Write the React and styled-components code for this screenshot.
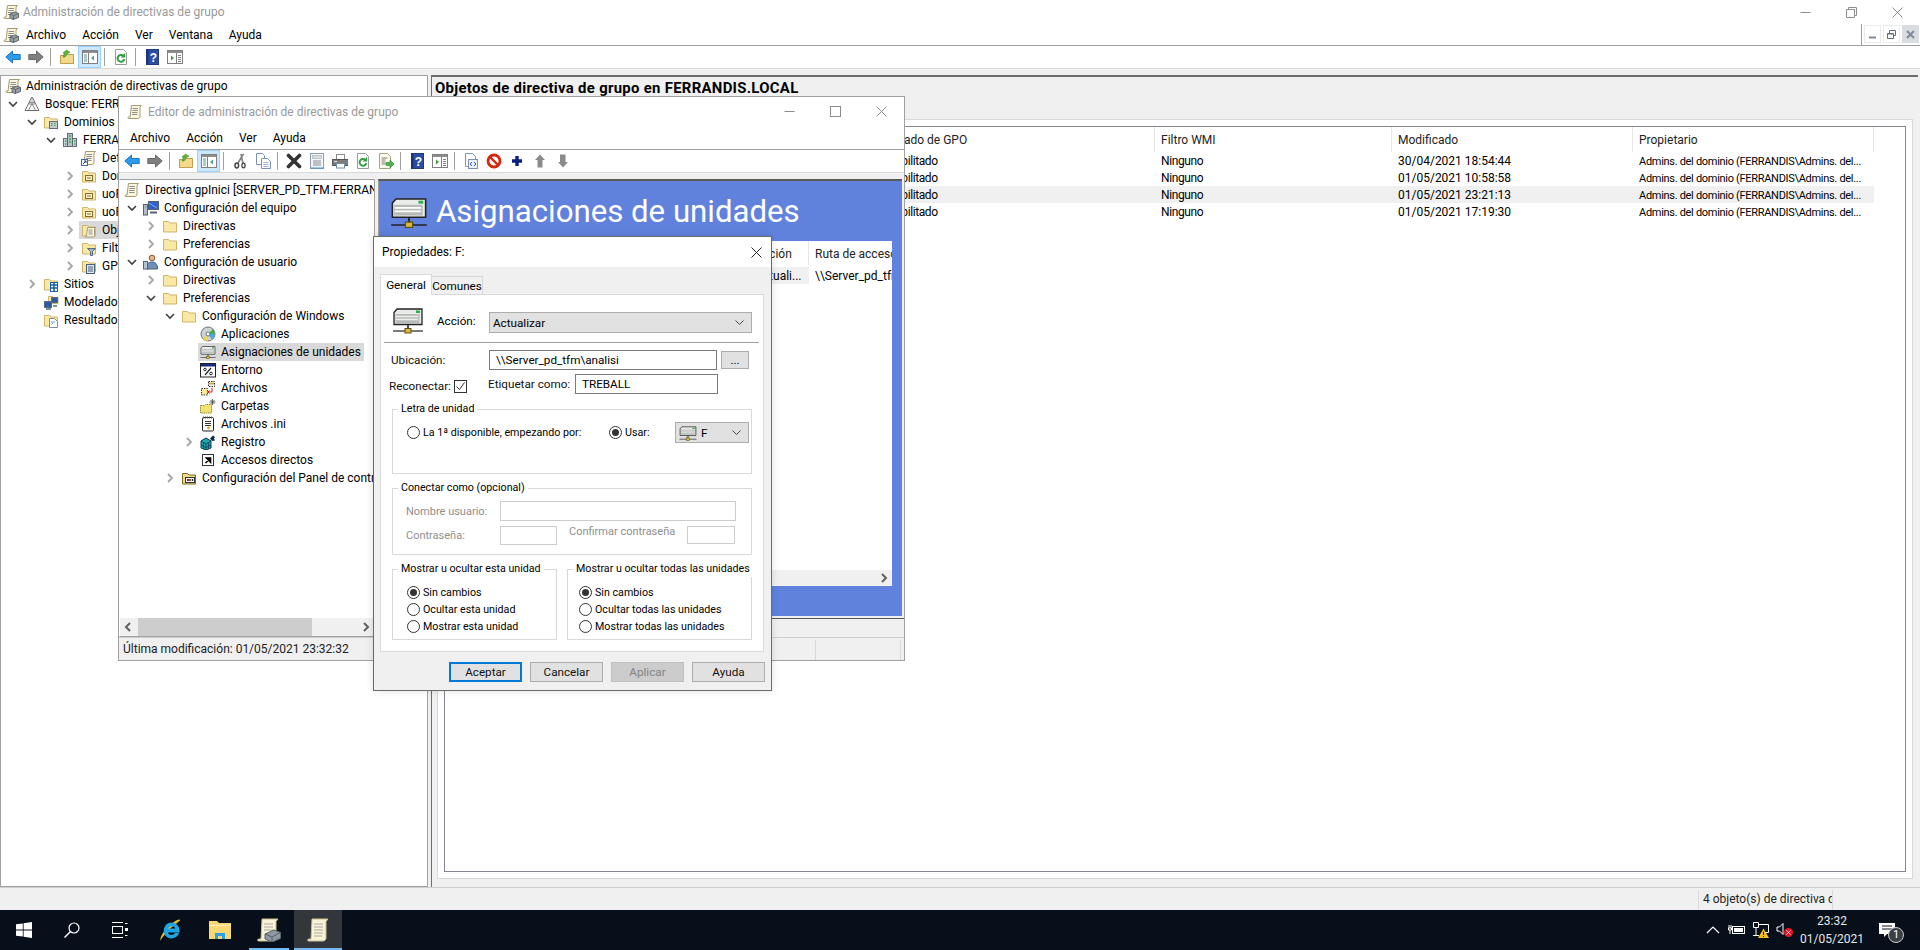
import styled, { createGlobalStyle } from 'styled-components'

const GlobalStyle = createGlobalStyle`
html, body { margin: 0; padding: 0; background: #fff; overflow: hidden; }
* { box-sizing: border-box; }
body { font-family: Roboto, "Noto Sans", sans-serif; font-size: 12px; color: #000; }
`

// ---- icons ----
const IconSvg = styled.svg`
display: block;
flex: none;
`

const paper = '#fbf6dc'
const paperEdge = '#a59a74'
const folderFill = '#f9e8a6'
const folderEdge = '#cfb469'

const FolderBase = () => <path d="M1.5 3.5h5l1.5 1.5h6.5v9h-13z" fill={folderFill} stroke={folderEdge} />
const ScrollBase = () => (
  <>
    <path d="M4.5 1.5h10l-1.5 1.5v9c0 1.5-1 2.5-2 2.5H1.5c-.8 0-.8-1.5.3-1.5H3z" fill={paper} stroke={paperEdge} />
    <path d="M5.5 4.5h5.5M5.5 6.5h5.5M5 8.5h5.5M5 10.5h5.5" stroke="#8f8f8f" />
  </>
)

const GLYPHS = {
  folder: <FolderBase />,
  scroll: <ScrollBase />,
  gpmc: (
    <>
      <ScrollBase />
      <path d="M7 10l5-2 3.5 1.5v4L10 15.5 7 14z" fill="#9aa3a8" stroke="#5e666b" />
      <path d="M7 10l3.5 1.5 5-2M10.5 11.5v4" stroke="#5e666b" fill="none" />
    </>
  ),
  back: <path d="M.8 8L7.5 2v3.5h7.7v5H7.5V14z" fill="#2d9bec" stroke="#2179bd" strokeLinejoin="round" />,
  forward: <path d="M15.2 8L8.5 2v3.5H.8v5h7.7V14z" fill="#808080" stroke="#6b6b6b" strokeLinejoin="round" />,
  up: (
    <>
      <path d="M1.5 6.5h5l1-1h7v9h-13z" fill="#f3d98b" stroke="#bf9f4f" />
      <path d="M4 8l1.5-4H4l3.5-3L11 3.5 9 4 6 8z" fill="#5fb336" stroke="#3f8a20" strokeWidth=".6" />
    </>
  ),
  tree: (
    <>
      <rect x=".5" y="1.5" width="15" height="13" fill="#fff" stroke="#7f7f7f" />
      <rect x="1" y="2" width="14" height="2" fill="#8d8d8d" />
      <path d="M6.5 4v10" stroke="#7f7f7f" />
      <path d="M2 6h3M2 8h3M2 10h3M2 12h3" stroke="#4f9a9a" />
      <path d="M12 6.5v5L9 9z" fill="#4f9a9a" />
    </>
  ),
  refresh: (
    <>
      <path d="M2.5 .5h8l3 3v12h-11z" fill="#fff" stroke="#9a9a9a" />
      <path d="M11.3 10a3.4 3.4 0 1 1-1-3.2" fill="none" stroke="#2f9e3f" strokeWidth="2" />
      <path d="M12.2 3.8v4.7H7.8z" fill="#2f9e3f" />
    </>
  ),
  help: (
    <>
      <rect x="2.5" y=".5" width="12" height="15" fill="#2c4da6" stroke="#203a80" />
      <rect x="2.5" y=".5" width="2" height="15" fill="#1c3378" />
      <text x="9.5" y="12.5" fontSize="12" fontWeight="700" fill="#fff" textAnchor="middle" fontFamily="Liberation Sans, sans-serif">?</text>
    </>
  ),
  action: (
    <>
      <rect x=".5" y="1.5" width="15" height="13" fill="#fff" stroke="#7f7f7f" />
      <rect x="1" y="2" width="14" height="2" fill="#8d8d8d" />
      <path d="M9.5 4v10" stroke="#7f7f7f" />
      <path d="M11 6.5h3M11 8.5h3M11 10.5h3M11 12.5h3" stroke="#7f7f7f" />
      <path d="M4 6.5v5L7 9z" fill="#3fa03f" />
    </>
  ),
  cut: (
    <>
      <path d="M11.5.8L6 10M9 .8l2 9.5" stroke="#7e7e7e" strokeWidth="1.6" fill="none" />
      <ellipse cx="4.8" cy="12.5" rx="1.8" ry="2.4" fill="none" stroke="#444" strokeWidth="1.5" />
      <ellipse cx="11.5" cy="12.5" rx="1.6" ry="2.3" fill="none" stroke="#444" strokeWidth="1.3" />
    </>
  ),
  copy: (
    <>
      <path d="M1.5.5h6l2 2v9h-8z" fill="#fff" stroke="#7993b5" />
      <path d="M6.5 5.5h6l3 3v7h-9z" fill="#fff" stroke="#7993b5" />
      <path d="M8.5 9.5h5M8.5 11.5h5M8.5 13.5h5" stroke="#9fb4cf" />
    </>
  ),
  del: <path d="M2.5 2.5l11 11M13.5 2.5l-11 11" stroke="#333" strokeWidth="3.6" strokeLinecap="round" />,
  props: (
    <>
      <rect x="1.5" y=".5" width="13" height="15" fill="#f6f6f6" stroke="#8f9ba8" />
      <rect x="3.5" y="2.5" width="9" height="3" fill="#d7dde4" stroke="#a5afba" strokeWidth=".6" />
      <path d="M4 8h8M4 10h8M4 12h8" stroke="#7f8c9a" />
      <path d="M2 15h12" stroke="#3d9ad6" />
    </>
  ),
  print: (
    <>
      <rect x="4.5" y="1.5" width="8" height="5" fill="#fff" stroke="#8a8a8a" />
      <rect x=".5" y="6.5" width="16" height="6" fill="#7c7c7c" stroke="#555" />
      <rect x="4.5" y="10.5" width="8" height="4.5" fill="#fff" stroke="#6e8fb0" />
      <path d="M2 8.5h3" stroke="#e4e4e4" />
    </>
  ),
  exportList: (
    <>
      <path d="M1.5 .5h8l3 3v12h-11z" fill="#fdfbe8" stroke="#a8a183" />
      <path d="M3.5 5h6M3.5 7h4M3.5 9h4M3.5 11h4" stroke="#7d7d7d" />
      <path d="M8 9.5h4V7l4 4-4 4v-2.5H8z" fill="#4fb34f" stroke="#2f8a2f" strokeWidth=".6" />
    </>
  ),
  xml: (
    <>
      <path d="M2.5 .5h7l3 3v4" fill="#fff" stroke="#7c94b5" />
      <path d="M2.5 .5v13h4" fill="none" stroke="#7c94b5" />
      <rect x="5.5" y="6.5" width="9" height="9" fill="#e9f0fb" stroke="#7c94b5" />
      <path d="M9 9l-2 2 2 2M11 9l2 2-2 2" stroke="#2f58b8" fill="none" />
    </>
  ),
  stop: (
    <>
      <circle cx="8" cy="8" r="6" fill="#fff" stroke="#d8250e" strokeWidth="2.8" />
      <path d="M4 4l8 8" stroke="#d8250e" strokeWidth="2.4" />
    </>
  ),
  plus: <path d="M8 3v10M3 8h10" stroke="#0b1f80" strokeWidth="3.4" />,
  upGray: <path d="M8 1.5L13 7H10.5v7.5h-5V7H3z" fill="#8b8b8b" />,
  downGray: <path d="M5 1.5h5.5V9H13l-5 5.5L3 9h2z" fill="#8b8b8b" />,
  forest: (
    <>
      <path d="M8 1L15 14.5H1z" fill="#fff" stroke="#6c6c6c" />
      <path d="M8 7.5L4.5 14.5M8 7.5l3.5 7M5 8h6" stroke="#8a8a8a" fill="none" />
      <path d="M8 1l3 5.5H5z" fill="#d7d7d7" stroke="#6c6c6c" strokeWidth=".7" />
    </>
  ),
  domains: (
    <>
      <FolderBase />
      <rect x="6.5" y="7.5" width="8" height="7" fill="#c4cbd3" stroke="#5f6b78" />
      <path d="M8 9.5h1.5M11 9.5h1.5M8 11.5h1.5M11 11.5h1.5" stroke="#3f9a56" />
    </>
  ),
  domain: (
    <>
      <rect x="5.5" y="1.5" width="5" height="13" fill="#b6bec6" stroke="#5f6b78" />
      <rect x="1.5" y="6.5" width="4" height="8" fill="#c7ced5" stroke="#5f6b78" />
      <rect x="10.5" y="6.5" width="4" height="8" fill="#c7ced5" stroke="#5f6b78" />
      <path d="M7 4h2M7 7h2M7 10h2M3 9h1.5M12 9h1.5M3 12h1.5M12 12h1.5" stroke="#3caa50" strokeWidth="1.4" />
    </>
  ),
  gpolink: (
    <>
      <ScrollBase />
      <rect x=".5" y="9.5" width="6" height="6" fill="#fff" stroke="#4466aa" />
      <path d="M2 14l3-3M3 11h2v2" stroke="#1b3f9a" fill="none" />
    </>
  ),
  ou: (
    <>
      <FolderBase />
      <rect x="4.5" y="7.5" width="7" height="5" fill="#fff3c9" stroke="#7e6d32" />
      <path d="M6 10h4" stroke="#7e6d32" />
    </>
  ),
  obj: (
    <>
      <FolderBase />
      <path d="M6.5 5.5h8l-1 1v6.5c0 1-.8 2-1.6 2H4.5c-.6 0-.6-1 .2-1H5.5z" fill={paper} stroke={paperEdge} />
      <path d="M7.5 8h4M7.5 10h4M7.5 12h4" stroke="#8f8f8f" />
    </>
  ),
  filter: (
    <>
      <FolderBase />
      <path d="M6.5 8.5h8l-3 3v4h-2v-4z" fill="#9fb9cf" stroke="#566b80" />
    </>
  ),
  starter: (
    <>
      <FolderBase />
      <rect x="5.5" y="6.5" width="8" height="9" fill="#dfe6ef" stroke="#4e5f74" />
      <path d="M7 9h5M7 11h5M7 13h5" stroke="#42617f" />
    </>
  ),
  sites: (
    <>
      <FolderBase />
      <rect x="7.5" y="6.5" width="7" height="9" fill="#fff" stroke="#1560b0" />
      <path d="M8 9h6M8 12h6M11 7v8" stroke="#1560b0" strokeWidth="1.6" />
    </>
  ),
  model: (
    <>
      <path d="M5.5 2.5h4l1 1h4.5v6h-9.5z" fill={folderFill} stroke={folderEdge} />
      <rect x="1.5" y="7.5" width="7" height="6" fill="#2a5aa8" stroke="#5c6976" />
      <rect x="8.5" y="3.5" width="6" height="5" fill="#2a5aa8" stroke="#5c6976" />
      <path d="M3 15h5M10 12h4" stroke="#5c6976" strokeWidth="1.5" />
    </>
  ),
  results: (
    <>
      <FolderBase />
      <path d="M6.5 6.5h5l3 3v6h-8z" fill="#fff" stroke="#7f8c9a" />
      <path d="M8.5 12.5l1.5-1.5M8 10h4" stroke="#5fa0d0" />
    </>
  ),
  computer: (
    <>
      <rect x="5.5" y="1.5" width="10" height="8" fill="#2c62d0" stroke="#55606c" />
      <path d="M6 3l8 5" stroke="#7fb0f0" />
      <rect x=".5" y="4.5" width="4" height="10.5" fill="#b5bec7" stroke="#55606c" />
      <path d="M7 12.5h7" stroke="#55606c" strokeWidth="2" />
      <path d="M2 7h1.5" stroke="#3f9ad6" />
    </>
  ),
  user: (
    <>
      <circle cx="9" cy="4" r="2.8" fill="#e8b585" stroke="#7e5a38" />
      <path d="M3.5 15c0-5 2-7 5.5-7s5.5 2 5.5 7z" fill="#6f8fb8" stroke="#4a5f7e" />
      <rect x=".5" y="7.5" width="4" height="7.5" fill="#b6c3d4" stroke="#536478" />
    </>
  ),
  cd: (
    <>
      <circle cx="8" cy="8" r="7" fill="#cfd2d4" stroke="#6f7478" />
      <path d="M8 8L13 3a7 7 0 0 1 1.8 5z" fill="#3fb04f" />
      <path d="M8 8L3 13a7 7 0 0 0 5 2z" fill="#f1d63f" />
      <path d="M8 8L15 8a7 7 0 0 1-3 5.5z" fill="#49a7e6" />
      <circle cx="8" cy="8" r="2" fill="#fff" stroke="#6f7478" />
    </>
  ),
  env: (
    <>
      <rect x=".5" y="1.5" width="15" height="13.5" fill="#fff" stroke="#222" />
      <rect x="1" y="2" width="14" height="2.5" fill="#18287a" />
      <path d="M5 13l6-7" stroke="#222" strokeWidth="1.2" />
      <circle cx="5" cy="7.5" r="1.3" fill="none" stroke="#222" />
      <circle cx="11" cy="11.5" r="1.3" fill="none" stroke="#222" />
    </>
  ),
  files: (
    <>
      <path d="M8.5 1.5h6v5h-6z" fill="#fff" stroke="#333" strokeDasharray="1.5 1" />
      <path d="M9 3.5h5" stroke="#c8a93a" strokeWidth="2" />
      <path d="M1.5 8.5h6v6.5h-6z" fill="#f7ec94" stroke="#333" strokeDasharray="1.5 1" />
      <path d="M12 8v4H8M9.5 10.5L8 12l1.5 1.5" stroke="#d21c1c" fill="none" />
    </>
  ),
  folders: (
    <>
      <path d="M.5 7.5h4l1-1h6v8.5h-11z" fill="#f2e36f" stroke="#8d8233" strokeDasharray="1.4 .8" />
      <path d="M12.5 1v6M9.5 4h6M10.5 2l4 4M14.5 2l-4 4" stroke="#555" strokeWidth=".9" />
    </>
  ),
  ini: (
    <>
      <rect x="2.5" y="1.5" width="11" height="13.5" rx="1" fill="#fff" stroke="#222" />
      <path d="M3 1.5h10" stroke="#555" strokeWidth="2" strokeDasharray="1 1" />
      <path d="M5 5.5h6M5 7.5h6M5 9.5h6" stroke="#333" />
      <circle cx="8.5" cy="12" r="1.4" fill="#d9b126" />
    </>
  ),
  registry: (
    <>
      <path d="M1 7l5-3 5 3v7l-5 2-5-2z" fill="#21a5a5" stroke="#0c3b5c" />
      <path d="M1 7l5 3 5-3M6 10v6M3.5 8.5v6M8.5 8.5v6M1 11l5 2.5 5-2.5" stroke="#0c3b5c" fill="none" strokeWidth=".8" />
      <path d="M10 4.5l3-3 2 1.5-1 1.5 1 2-3 .5z" fill="#102a5a" />
    </>
  ),
  shortcut: (
    <>
      <rect x="2.5" y="2.5" width="11" height="11" fill="#fff" stroke="#333" />
      <path d="M5.5 11l4-4M6.5 6h4v4z" stroke="#000" strokeWidth="1.6" fill="#000" />
    </>
  ),
  cpanel: (
    <>
      <path d="M1.5 3.5h5l1.5 1.5h6.5v9h-13z" fill="#f0dc7c" stroke="#77692c" />
      <rect x="4.5" y="7.5" width="9" height="5" fill="#fff" stroke="#333" />
      <path d="M6 10h2" stroke="#c01818" strokeWidth="2" />
      <path d="M9 11V9M11.5 11V9" stroke="#333" strokeWidth="1.5" />
    </>
  ),
}

const Glyph = ({ name, size = 16 }) => (
  <IconSvg width={size} height={size} viewBox="0 0 16 16">{GLYPHS[name]}</IconSvg>
)

// the mapped drive: used small in the tree and large in the dialog and banner
const DriveIcon = ({ size = 32, light }) => (
  <IconSvg width={size} height={size} viewBox="0 0 32 32">
    <path d="M2 8.5L5 5h25v15.5H2z" fill="#e9ece8" stroke="#222" strokeWidth="1.3" />
    <rect x="3.5" y="10" width="24" height="9" fill="#b7bcb8" />
    <path d="M4 12.5h22M4 15.5h22" stroke={light ? '#fff' : '#eef0ee'} strokeWidth="1.4" />
    <rect x="24" y="6.5" width="4" height="2.5" fill="#28b04a" />
    <path d="M16 20.5v5" stroke="#222" strokeWidth="1.6" />
    <path d="M1 27h30" stroke="#222" strokeWidth="1.2" />
    <rect x="13" y="24.5" width="6" height="4.5" fill="#d9b93c" stroke="#5f5012" />
  </IconSvg>
)

const ArrowLeft = () => (
  <IconSvg width="10" height="10" viewBox="0 0 10 10"><path d="M7 1L3 5l4 4" fill="none" stroke="#606060" strokeWidth="2" /></IconSvg>
)
const ArrowRight = () => (
  <IconSvg width="10" height="10" viewBox="0 0 10 10"><path d="M3 1l4 4-4 4" fill="none" stroke="#606060" strokeWidth="2" /></IconSvg>
)
const SelectArrow = () => (
  <IconSvg width="9" height="6" viewBox="0 0 9 6"><path d="M.5 .5l4 4 4-4" fill="none" stroke="#444" /></IconSvg>
)
const CheckMark = () => (
  <IconSvg width="11" height="11" viewBox="0 0 11 11"><path d="M1.5 5.5l3 3 5-7" fill="none" stroke="#333" /></IconSvg>
)

// ---- shell ----
const Screen = styled.div`
position: relative;
width: 1920px;
height: 950px;
display: flex;
flex-direction: column;
overflow: hidden;
background: #fff;
`

const TitleBar = styled.div`
display: flex;
align-items: center;
height: ${p => p.$h}px;
padding-left: ${p => p.$left}px;
padding-top: ${p => p.$pt || 0}px;
gap: ${p => p.$gap}px;
background: #fff;
flex: none;
`

const TitleText = styled.span`
color: #999;
`

const WinControls = styled.div`
display: flex;
margin-left: auto;
`

const WinButton = styled.div`
width: ${p => p.$w}px;
height: ${p => p.$h}px;
display: flex;
align-items: center;
justify-content: center;
`

const MenuBar = styled.div`
display: flex;
align-items: center;
height: ${p => p.$h}px;
padding-left: ${p => p.$left}px;
padding-top: ${p => p.$pt || 0}px;
gap: 16px;
border-bottom: 1px solid #a0a0a0;
background: #fff;
flex: none;
`

const MenuLogo = styled.div`
margin-right: -9px;
`

const MdiButtons = styled.div`
margin-left: auto;
height: 100%;
display: flex;
gap: 2px;
padding: 1px 1px 3px 2px;
border-left: 1px solid #a0a0a0;
`

const MdiButton = styled.div`
width: 17px;
height: 18px;
display: flex;
align-items: center;
justify-content: center;
border: 1px solid ${p => (p.$on ? '#d9dde2' : '#ebebeb')};
background: ${p => (p.$on ? '#d9dde2' : '#fff')};
`

const Toolbar = styled.div`
display: flex;
align-items: center;
height: 22px;
padding-left: 1px;
background: #fff;
flex: none;
`

const ToolSlot = styled.div`
width: 23px;
height: 22px;
display: flex;
align-items: center;
justify-content: center;
flex: none;
${p => p.$pressed && 'background: #cce8ff; border: 1px solid #99d1ff;'}
`

const ToolSep = styled.div`
width: 1px;
height: 18px;
margin: 0 4px 0 3px;
background: #a0a0a0;
flex: none;
`

const MainBody = styled.div`
flex: 1;
min-height: 0;
display: flex;
padding-top: 6px;
background: #f0f0f0;
border-top: 1px solid #d9d9d9;
`

const TreePane = styled.div`
width: ${p => p.$w}px;
flex: none;
background: #fff;
border: 1px solid #a0a0a0;
border-left-color: ${p => (p.$noLeft ? 'transparent' : '#a0a0a0')};
overflow: hidden;
display: flex;
flex-direction: column;
`

const TreeScroll = styled.div`
flex: 1;
min-height: 0;
overflow: hidden;
padding-top: ${p => p.$top}px;
`

const Row = styled.div`
display: flex;
align-items: center;
height: 18px;
white-space: nowrap;
padding-left: ${p => (p.$lvl === 0 ? 2 : 2 + 19 * (p.$lvl - 1))}px;
`

const ChevSlot = styled.div`
width: 19px;
height: 18px;
flex: none;
display: flex;
align-items: center;
justify-content: center;
`

const NodeBody = styled.div`
display: flex;
align-items: center;
height: 18px;
padding: 0 3px 0 2px;
gap: 5px;
background: ${p => (p.$sel ? '#d9d9d9' : 'transparent')};
`

const Chevron = ({ dir }) => (
  <IconSvg width="10" height="10" viewBox="0 0 10 10">
    {dir === 'down'
      ? <path d="M1 3l4 4 4-4" fill="none" stroke="#404040" strokeWidth="1.6" />
      : <path d="M3 1l4 4-4 4" fill="none" stroke="#a6a6a6" strokeWidth="1.8" />}
  </IconSvg>
)

const TreeRow = ({ lvl, chev, icon, text, sel }) => (
  <Row $lvl={lvl}>
    {lvl > 0 && <ChevSlot>{chev && <Chevron dir={chev} />}</ChevSlot>}
    <NodeBody $sel={sel}>
      {icon === 'drive' ? <DriveIcon size={16} /> : <Glyph name={icon} />}
      <span>{text}</span>
    </NodeBody>
  </Row>
)

const RightPane = styled.div`
flex: 1;
min-width: 0;
margin: 0 2px 0 3px;
display: flex;
flex-direction: column;
border-top: 2px solid #6d6d6d;
border-left: 1px solid #6d6d6d;
`

const PaneHeading = styled.div`
height: 42px;
flex: none;
padding-left: 3px;
line-height: 22px;
font-size: 14.9px;
letter-spacing: .3px;
font-weight: 700;
`

const TabPage = styled.div`
flex: 1;
min-height: 0;
margin: 0 5px 8px 5px;
padding: 6px;
background: #fff;
border: 1px solid #d9d9d9;
display: flex;
`

const ListBox = styled.div`
flex: 1;
min-width: 0;
border: 1px solid #828790;
background: #fff;
`

const GridRow = styled.div`
display: grid;
grid-template-columns: ${p => p.$cols};
width: max-content;
background: ${p => (p.$sel ? '#f0f0f0' : 'transparent')};
`

const HeadCell = styled.div`
height: ${p => p.$h}px;
line-height: ${p => p.$h + 2}px;
padding-left: 6px;
border-right: 1px solid #e5e5e5;
white-space: nowrap;
overflow: hidden;
color: #222;
`

const BodyCell = styled.div`
height: 17px;
line-height: 19px;
padding-left: 6px;
white-space: nowrap;
overflow: hidden;
background: ${p => (p.$sel ? '#f0f0f0' : 'transparent')};
letter-spacing: ${p => (p.$tight ? '-.4px' : '0')};
`

const OwnerCell = styled(BodyCell)`
font-size: 11px;
letter-spacing: -.3px;
`

const StatusBar = styled.div`
height: 23px;
flex: none;
display: flex;
background: #f0f0f0;
border-top: 1px solid #cfcfcf;
padding-top: 2px;
`

const StatusCell = styled.div`
width: ${p => p.$w}px;
flex: none;
border-right: 1px solid #d9d9d9;
padding-left: 4px;
line-height: 18px;
white-space: nowrap;
overflow: hidden;
color: #222;
`

// ---- editor window ----
const EditorWindow = styled.div`
position: absolute;
left: 118px;
top: 96px;
width: 787px;
height: 565px;
background: #fff;
border: 1px solid #a0a0a0;
display: flex;
flex-direction: column;
`

const EditorBody = styled.div`
flex: 1;
min-height: 0;
display: flex;
padding-top: 6px;
background: #f0f0f0;
border-top: 1px solid #d9d9d9;
`

const EditorRight = styled.div`
flex: 1;
min-width: 0;
margin-left: 3px;
display: flex;
flex-direction: column;
`

const BluePanel = styled.div`
flex: 1;
min-height: 0;
margin-right: 2px;
display: flex;
flex-direction: column;
overflow: hidden;
background: #6082dd;
border-top: 2px solid #5a5a5a;
border-left: 1px solid #a0a0a0;
padding: 0 10px 30px 3px;
`

const Banner = styled.div`
height: 60px;
flex: none;
display: flex;
align-items: center;
padding: 1px 0 0 8px;
gap: 8px;
color: #fff;
font-size: 31.2px;
white-space: nowrap;
`

const DetailList = styled.div`
flex: 1;
min-height: 0;
min-width: 0;
background: #fff;
display: flex;
flex-direction: column;
overflow: hidden;
`

const DetailRows = styled.div`
flex: 1;
min-height: 0;
padding-top: 2px;
`

const HScrollBar = styled.div`
height: ${p => p.$h}px;
flex: none;
display: flex;
align-items: center;
justify-content: ${p => (p.$end ? 'flex-end' : 'flex-start')};
background: #f0f0f0;
padding: 0 3px;
`

const ScrollThumb = styled.div`
width: 174px;
height: 100%;
margin: 0 auto 0 5px;
background: #cdcdcd;
`

const FooterLine = styled.div`
height: 19px;
margin-top: 2px;
flex: none;
border-top: 1px solid #5a5a5a;
`

// ---- dialog ----
const Dialog = styled.div`
position: absolute;
left: 373px;
top: 236px;
width: 399px;
height: 455px;
background: #f0f0f0;
border: 1px solid #6a6a6a;
display: flex;
flex-direction: column;
box-shadow: 0 0 8px rgba(0, 0, 0, .12);
`

const DialogTitle = styled.div`
height: 30px;
flex: none;
display: flex;
align-items: center;
justify-content: space-between;
padding: 0 9px 0 8px;
background: #fff;
`

const DialogBody = styled.div`
flex: 1;
padding: 7px 6px 0 6px;
display: flex;
flex-direction: column;
font-size: 11.7px;
`

const Tabs = styled.div`
display: flex;
align-items: flex-end;
height: 21px;
margin-bottom: -1px;
position: relative;
`

const Tab = styled.div`
height: ${p => (p.$on ? 21 : 19)}px;
width: 52px;
display: flex;
align-items: center;
justify-content: center;
background: ${p => (p.$on ? '#fff' : '#f0f0f0')};
border: 1px solid #d9d9d9;
border-bottom: ${p => (p.$on ? 'none' : '1px solid #d9d9d9')};
margin-left: ${p => (p.$on ? 0 : '-1px')};
position: relative;
z-index: ${p => (p.$on ? 1 : 0)};
`

const TabPanel = styled.div`
width: 384px;
height: 358px;
background: #fff;
border: 1px solid #d9d9d9;
display: flex;
flex-direction: column;
`

const ActionRow = styled.div`
display: flex;
align-items: center;
margin-top: 9px;
height: 32px;
padding-left: 11px;
`

const ActionLabel = styled.span`
width: 52px;
margin-left: 13px;
flex: none;
margin-top: 1px;
`

const SelectBox = styled.div`
width: ${p => p.$w}px;
height: 21px;
flex: none;
display: flex;
align-items: center;
justify-content: space-between;
gap: 5px;
padding: 0 7px 0 3px;
background: #e1e1e1;
border: 1px solid #adadad;
margin-top: ${p => p.$top || 0}px;
`

const SelectValue = styled.span`
display: flex;
align-items: center;
gap: 4px;
`

const Separator = styled.div`
height: 1px;
margin: 6px 4px 0 3px;
background: #a0a0a0;
flex: none;
`

const FormRow = styled.div`
display: flex;
align-items: center;
margin-top: ${p => p.$top}px;
padding-left: ${p => p.$left}px;
flex: none;
`

const FieldLabel = styled.span`
width: ${p => p.$w}px;
flex: none;
white-space: nowrap;
color: ${p => (p.$off ? '#8f8f8f' : '#111')};
font-size: ${p => (p.$off ? '11px' : 'inherit')};
margin-top: ${p => p.$mt || 0}px;
margin-bottom: ${p => p.$mb || 0}px;
padding-left: ${p => p.$pl || 0}px;
`

const TextField = styled.div`
width: ${p => p.$w}px;
height: ${p => p.$h || 20}px;
flex: none;
padding-left: 6px;
line-height: ${p => (p.$h || 20) - 2}px;
background: #fff;
border: 1px solid ${p => (p.$off ? '#cccccc' : '#7a7a7a')};
`

const DotsButton = styled.div`
width: 28px;
height: 18px;
margin-left: 4px;
text-align: center;
line-height: 16px;
background: #e1e1e1;
border: 1px solid #adadad;
`

const CheckBox = styled.div`
width: 13px;
height: 13px;
flex: none;
display: flex;
align-items: center;
justify-content: center;
background: #fff;
border: 1px solid #333;
margin: 4px 21px 0 0;
`

const Group = styled.fieldset`
margin: ${p => p.$top}px 0 0 0;
padding: 0;
width: ${p => p.$w}px;
height: ${p => p.$h}px;
border: 1px solid #d9d9d9;
min-width: 0;
flex: none;
`

const GroupTitle = styled.legend`
margin-left: 5px;
padding: 0 3px;
height: 16px;
line-height: 16px;
font-size: 10.7px;
white-space: nowrap;
`

const GroupsRow = styled.div`
display: flex;
gap: 10px;
margin-left: 11px;
flex: none;
`

const InsetGroup = styled(Group)`
margin-left: 11px;
`

const RadioRow = styled.div`
display: flex;
align-items: center;
height: 17px;
gap: 3px;
padding-left: ${p => p.$left || 0}px;
font-size: 10.7px;
white-space: nowrap;
`

const RadioDot = styled.span`
width: 13px;
height: 13px;
flex: none;
display: flex;
align-items: center;
justify-content: center;
background: #fff;
border: 1px solid #333;
border-radius: 50%;
&::after {
  content: '';
  width: 7px;
  height: 7px;
  border-radius: 50%;
  background: ${p => (p.$on ? '#333' : 'transparent')};
}
`

const RadioList = styled.div`
padding-top: 7px;
`

const DriveLetterRow = styled.div`
display: grid;
grid-template-columns: 202px 66px 74px;
align-items: center;
height: 21px;
margin-top: 5px;
padding-left: 14px;
`

const DialogButtons = styled.div`
display: flex;
justify-content: flex-end;
gap: 8px;
margin-top: 10px;
`

const PushButton = styled.div`
width: 73px;
height: 20px;
display: flex;
align-items: center;
justify-content: center;
background: ${p => (p.$off ? '#cccccc' : '#e1e1e1')};
color: ${p => (p.$off ? '#838383' : '#111')};
border: ${p => (p.$def ? '2px solid #0078d7' : `1px solid ${p.$off ? '#bfbfbf' : '#adadad'}`)};
`

// ---- taskbar ----
const Taskbar = styled.div`
height: 40px;
flex: none;
display: flex;
background: #060f1a;
color: #fff;
`

const TaskSlot = styled.div`
position: relative;
width: 48px;
height: 40px;
flex: none;
display: flex;
align-items: center;
justify-content: center;
margin-left: ${p => p.$left || 0}px;
background: ${p => (p.$active ? '#33373c' : 'transparent')};
${p => p.$open && `&::after {
  content: '';
  position: absolute;
  bottom: 0;
  left: ${p.$active ? 0 : 4}px;
  right: ${p.$active ? 0 : 4}px;
  height: 2px;
  background: #76b9ed;
}`}
`

const Tray = styled.div`
margin-left: auto;
display: flex;
align-items: center;
padding-right: 13px;
`

const TraySlot = styled.div`
width: 24px;
height: 40px;
display: flex;
align-items: center;
justify-content: center;
`

const Clock = styled.div`
width: 70px;
text-align: center;
line-height: 18px;
font-size: 12px;
color: #e8e8e8;
`

const NotifySlot = styled.div`
position: relative;
width: 40px;
height: 40px;
display: flex;
align-items: center;
justify-content: center;
`

const NotifyBadge = styled.span`
position: absolute;
left: 21px;
top: 17px;
width: 16px;
height: 16px;
border-radius: 50%;
border: 1px solid #ccc;
background: #3a3f45;
text-align: center;
line-height: 14px;
font-size: 11px;
`

const WindowsLogo = () => (
  <IconSvg width="16" height="16" viewBox="0 0 16 16">
    <path d="M0 2.3L6.8 1.4V7.6H0zM7.6 1.3L16 0V7.6H7.6zM0 8.4H6.8V14.6L0 13.7zM7.6 8.4H16V16L7.6 14.7z" fill="#fff" />
  </IconSvg>
)
const SearchGlass = () => (
  <IconSvg width="18" height="18" viewBox="0 0 18 18">
    <circle cx="11" cy="7" r="5" fill="none" stroke="#fff" strokeWidth="1.2" />
    <path d="M7.5 10.5L1.5 16.5" stroke="#fff" strokeWidth="1.4" />
  </IconSvg>
)
const TaskViewIcon = () => (
  <IconSvg width="18" height="16" viewBox="0 0 18 16">
    <path d="M1 .5h11M1 15.5h11" stroke="#fff" />
    <rect x="1.5" y="4.5" width="10" height="7" fill="none" stroke="#fff" />
    <rect x="14" y="1" width="2.5" height="1" fill="#fff" />
    <rect x="14" y="6" width="3" height="3" fill="#fff" />
    <rect x="14" y="13" width="2.5" height="1" fill="#fff" />
  </IconSvg>
)
const IeLogo = () => (
  <IconSvg width="24" height="24" viewBox="0 0 24 24">
    <path d="M20.5 1.5c2.5 1.5-5 4-12 12S1 22.5 2 23c-2-1 .5-7 5-12s11-10 13.5-9.5z" fill="#e5b728" />
    <path d="M12.5 4.5a8 8 0 0 1 8 8v2H9c.3 2.7 4.8 3.6 7 .5h4.2c-2 5.6-9 7-13 3.5-4.8-4.3-2.2-14 5.3-14zM9.2 10.5h7c-.4-2.8-6-3.2-7 0z" fill="#1ca6e2" fillRule="evenodd" />
  </IconSvg>
)
const ExplorerIcon = () => (
  <IconSvg width="22" height="20" viewBox="0 0 22 20">
    <path d="M0 1h8l2 2h12v16H0z" fill="#f8d775" />
    <path d="M0 5h22v1H0z" fill="#fff2c0" />
    <path d="M6 19v-6h10v6h-3v-3H9v3z" fill="#2e9fe2" />
  </IconSvg>
)
const BigScroll = () => (
  <IconSvg width="22" height="24" viewBox="0 0 22 24">
    <path d="M5 1h16l-2 2.5V20c0 1.5-1 3-3 3H1.5c-1.2 0-1.2-2 .5-2h2z" fill="#f9f3d6" stroke="#c7bd93" />
    <path d="M7 6h9M7 9h9M7 12h9M7 15h9M7 18h8" stroke="#a9a9a9" />
  </IconSvg>
)
const GpmcBig = () => (
  <IconSvg width="24" height="24" viewBox="0 0 24 24">
    <path d="M5 1h16l-2 2.5V20c0 1.5-1 3-3 3H1.5c-1.2 0-1.2-2 .5-2h2z" fill="#f9f3d6" stroke="#c7bd93" />
    <path d="M7 6h9M7 9h9M7 12h9" stroke="#a9a9a9" />
    <path d="M8 16l9-4 6.5 2.5v6L15 24l-7-3z" fill="#8f99a3" stroke="#59616a" />
    <path d="M8 16l7 3 8.5-4.5M15 19v5" stroke="#59616a" fill="none" />
  </IconSvg>
)
const TrayChevron = () => (
  <IconSvg width="14" height="10" viewBox="0 0 14 10"><path d="M1 8l6-6 6 6" fill="none" stroke="#fff" strokeWidth="1.2" /></IconSvg>
)
const PowerIcon = () => (
  <IconSvg width="18" height="12" viewBox="0 0 18 12">
    <rect x="4.5" y="2.5" width="12" height="7" fill="none" stroke="#fff" />
    <rect x="6" y="4" width="9" height="4" fill="#fff" />
    <path d="M1 1v3M3 1v3M.5 4h3v2H.5zM2 6v4" stroke="#fff" />
  </IconSvg>
)
const NetworkIcon = () => (
  <IconSvg width="18" height="18" viewBox="0 0 18 18">
    <path d="M6.5 3.5h10v8h-5M1.5 1.5h5v5h-5zM4 6.5v8M1 14.5h6" fill="none" stroke="#fff" />
    <path d="M11.5 7.5l5.5 9.5H6z" fill="#f7c21a" />
    <path d="M11.5 10.5v3.5M11.5 15v1" stroke="#111" />
  </IconSvg>
)
const SpeakerMuted = () => (
  <IconSvg width="18" height="16" viewBox="0 0 18 16">
    <path d="M1 5h2.5L7 1.5v11L3.5 9H1z" fill="none" stroke="#fff" />
    <circle cx="12.5" cy="10.5" r="4.5" fill="#e81123" />
    <path d="M10.5 8.5l4 4M14.5 8.5l-4 4" stroke="#fff" />
  </IconSvg>
)
const NotifyBubble = () => (
  <IconSvg width="16" height="15" viewBox="0 0 16 15">
    <path d="M0 0h16v11H8l-3 3v-3H0z" fill="#fff" />
    <path d="M3 3h10M3 6h10" stroke="#060f1a" />
  </IconSvg>
)
const CaptionIcon = ({ kind, color = '#8c8c8c' }) => (
  <IconSvg width="11" height="11" viewBox="0 0 11 11">
    {kind === 'min' && <path d="M.5 5.5h10" stroke={color} />}
    {kind === 'max' && <rect x=".5" y=".5" width="10" height="10" fill="none" stroke={color} />}
    {kind === 'restore' && <path d="M.5 2.5h8v8h-8zM2.5 2.5v-2h8v8h-2" fill="none" stroke={color} />}
    {kind === 'close' && <path d="M.5 .5l10 10M10.5 .5l-10 10" stroke={color} />}
  </IconSvg>
)
const MdiIcon = ({ kind }) => (
  <IconSvg width="9" height="9" viewBox="0 0 9 9">
    {kind === 'min' && <path d="M1 7.5h7" stroke="#7c8a9c" strokeWidth="2" />}
    {kind === 'restore' && <path d="M.5 3.5h6v5h-6zM.5 4h6M2.5 3V.5h6v5h-2" fill="none" stroke="#5f6e82" />}
    {kind === 'close' && <path d="M1 1l7 7M8 1l-7 7" stroke="#7c8a9c" strokeWidth="2" />}
  </IconSvg>
)

// ---- data ----
const MAIN_TREE = [
  { lvl: 0, icon: 'gpmc', text: 'Administración de directivas de grupo' },
  { lvl: 1, chev: 'down', icon: 'forest', text: 'Bosque: FERRANDIS.LOCAL' },
  { lvl: 2, chev: 'down', icon: 'domains', text: 'Dominios' },
  { lvl: 3, chev: 'down', icon: 'domain', text: 'FERRANDIS.LOCAL' },
  { lvl: 4, icon: 'gpolink', text: 'Default Domain Policy' },
  { lvl: 4, chev: 'right', icon: 'ou', text: 'Domain Controllers' },
  { lvl: 4, chev: 'right', icon: 'ou', text: 'uoFerrandis' },
  { lvl: 4, chev: 'right', icon: 'ou', text: 'uoFerrandis2' },
  { lvl: 4, chev: 'right', icon: 'obj', text: 'Objetos de directiva de grupo', sel: true },
  { lvl: 4, chev: 'right', icon: 'filter', text: 'Filtros WMI' },
  { lvl: 4, chev: 'right', icon: 'starter', text: 'GPO de inicio' },
  { lvl: 2, chev: 'right', icon: 'sites', text: 'Sitios' },
  { lvl: 2, icon: 'model', text: 'Modelado de directivas de grupo' },
  { lvl: 2, icon: 'results', text: 'Resultados de directivas de grupo' },
]

const EDITOR_TREE = [
  { lvl: 0, icon: 'scroll', text: 'Directiva gpInici [SERVER_PD_TFM.FERRANDIS.LOCAL] Directiva' },
  { lvl: 1, chev: 'down', icon: 'computer', text: 'Configuración del equipo' },
  { lvl: 2, chev: 'right', icon: 'folder', text: 'Directivas' },
  { lvl: 2, chev: 'right', icon: 'folder', text: 'Preferencias' },
  { lvl: 1, chev: 'down', icon: 'user', text: 'Configuración de usuario' },
  { lvl: 2, chev: 'right', icon: 'folder', text: 'Directivas' },
  { lvl: 2, chev: 'down', icon: 'folder', text: 'Preferencias' },
  { lvl: 3, chev: 'down', icon: 'folder', text: 'Configuración de Windows' },
  { lvl: 4, icon: 'cd', text: 'Aplicaciones' },
  { lvl: 4, icon: 'drive', text: 'Asignaciones de unidades', sel: true },
  { lvl: 4, icon: 'env', text: 'Entorno' },
  { lvl: 4, icon: 'files', text: 'Archivos' },
  { lvl: 4, icon: 'folders', text: 'Carpetas' },
  { lvl: 4, icon: 'ini', text: 'Archivos .ini' },
  { lvl: 4, chev: 'right', icon: 'registry', text: 'Registro' },
  { lvl: 4, icon: 'shortcut', text: 'Accesos directos' },
  { lvl: 3, chev: 'right', icon: 'cpanel', text: 'Configuración del Panel de control' },
]

const GPO_COLS = '436px 274px 237px 241px 241px'
const GPO_HEAD = ['Nombre', 'Estado de GPO', 'Filtro WMI', 'Modificado', 'Propietario']
const GPO_ROWS = [
  ['Default Domain Policy', 'Habilitado', 'Ninguno', '30/04/2021 18:54:44'],
  ['gpo1', 'Habilitado', 'Ninguno', '01/05/2021 10:58:58'],
  ['gpInici', 'Habilitado', 'Ninguno', '01/05/2021 23:21:13', true],
  ['gpo2', 'Habilitado', 'Ninguno', '01/05/2021 17:19:30'],
]
const OWNER = 'Admins. del dominio (FERRANDIS\\Admins. del...'

const DRIVE_COLS = '150px 217px 60px 120px'

const TOOL_MAIN = ['back', 'forward', '|', 'up', '*tree', '|', 'refresh', '|', 'help', 'action']
const TOOL_EDITOR = ['back', 'forward', '|', 'up', '*tree', '|', 'cut', 'copy', '|', 'del', 'props', 'print', 'refresh', 'exportList', '|', 'help', 'action', '|', 'xml', 'stop', 'plus', 'upGray', 'downGray']

const Tools = ({ items }) => items.map((item, i) => {
  if (item === '|') return <ToolSep key={i} />
  const pressed = item[0] === '*'
  return (
    <ToolSlot key={i} $pressed={pressed}>
      <Glyph name={pressed ? item.slice(1) : item} />
    </ToolSlot>
  )
})

const RadioLine = ({ on, left, children }) => (
  <RadioRow $left={left}>
    <RadioDot $on={on} />
    <span>{children}</span>
  </RadioRow>
)

function App() {
  return (
    <Screen>
      <GlobalStyle />
      <TitleBar $h={24} $left={3} $gap={4}>
        <Glyph name="gpmc" />
        <TitleText>Administración de directivas de grupo</TitleText>
        <WinControls>
          <WinButton $w={46} $h={24}><CaptionIcon kind="min" /></WinButton>
          <WinButton $w={46} $h={24}><CaptionIcon kind="restore" /></WinButton>
          <WinButton $w={46} $h={24}><CaptionIcon kind="close" /></WinButton>
        </WinControls>
      </TitleBar>
      <MenuBar $h={22} $left={3}>
        <MenuLogo><Glyph name="gpmc" /></MenuLogo>
        <span>Archivo</span>
        <span>Acción</span>
        <span>Ver</span>
        <span>Ventana</span>
        <span>Ayuda</span>
        <MdiButtons>
          <MdiButton><MdiIcon kind="min" /></MdiButton>
          <MdiButton><MdiIcon kind="restore" /></MdiButton>
          <MdiButton $on><MdiIcon kind="close" /></MdiButton>
        </MdiButtons>
      </MenuBar>
      <Toolbar><Tools items={TOOL_MAIN} /></Toolbar>
      <MainBody>
        <TreePane $w={428}>
          <TreeScroll $top={1}>
            {MAIN_TREE.map((n, i) => <TreeRow key={i} {...n} />)}
          </TreeScroll>
        </TreePane>
        <RightPane>
          <PaneHeading>Objetos de directiva de grupo en FERRANDIS.LOCAL</PaneHeading>
          <TabPage>
            <ListBox>
              <GridRow $cols={GPO_COLS}>
                {GPO_HEAD.map(h => <HeadCell key={h} $h={25}>{h}</HeadCell>)}
              </GridRow>
              {GPO_ROWS.map(([name, state, wmi, date, sel]) => (
                <GridRow key={date} $cols={GPO_COLS} $sel={sel}>
                  <BodyCell>{name}</BodyCell>
                  <BodyCell $tight>{state}</BodyCell>
                  <BodyCell $tight>{wmi}</BodyCell>
                  <BodyCell>{date}</BodyCell>
                  <OwnerCell>{OWNER}</OwnerCell>
                </GridRow>
              ))}
            </ListBox>
          </TabPage>
        </RightPane>
      </MainBody>
      <StatusBar>
        <StatusCell $w={1699} />
        <StatusCell $w={134}>4 objeto(s) de directiva de grupo</StatusCell>
      </StatusBar>
      <Taskbar>
        <TaskSlot><WindowsLogo /></TaskSlot>
        <TaskSlot><SearchGlass /></TaskSlot>
        <TaskSlot><TaskViewIcon /></TaskSlot>
        <TaskSlot $left={3}><IeLogo /></TaskSlot>
        <TaskSlot $left={1}><ExplorerIcon /></TaskSlot>
        <TaskSlot $left={1} $open><GpmcBig /></TaskSlot>
        <TaskSlot $left={1} $open $active><BigScroll /></TaskSlot>
        <Tray>
          <TraySlot><TrayChevron /></TraySlot>
          <TraySlot><PowerIcon /></TraySlot>
          <TraySlot><NetworkIcon /></TraySlot>
          <TraySlot><SpeakerMuted /></TraySlot>
          <Clock>23:32<br />01/05/2021</Clock>
          <NotifySlot>
            <NotifyBubble />
            <NotifyBadge>1</NotifyBadge>
          </NotifySlot>
        </Tray>
      </Taskbar>

      <EditorWindow>
        <TitleBar $h={27} $left={8} $gap={5} $pt={2}>
          <Glyph name="scroll" />
          <TitleText>Editor de administración de directivas de grupo</TitleText>
          <WinControls>
            <WinButton $w={46} $h={25}><CaptionIcon kind="min" /></WinButton>
            <WinButton $w={46} $h={25}><CaptionIcon kind="max" /></WinButton>
            <WinButton $w={46} $h={25}><CaptionIcon kind="close" /></WinButton>
          </WinControls>
        </TitleBar>
        <MenuBar $h={26} $left={11} $pt={3}>
          <span>Archivo</span>
          <span>Acción</span>
          <span>Ver</span>
          <span>Ayuda</span>
        </MenuBar>
        <Toolbar><Tools items={TOOL_EDITOR} /></Toolbar>
        <EditorBody>
          <TreePane $w={256} $noLeft>
            <TreeScroll $top={1}>
              {EDITOR_TREE.map((n, i) => <TreeRow key={i} {...n} />)}
            </TreeScroll>
            <HScrollBar $h={18}>
              <ArrowLeft />
              <ScrollThumb />
              <ArrowRight />
            </HScrollBar>
          </TreePane>
          <EditorRight>
            <BluePanel>
              <Banner>
                <DriveIcon size={38} light />
                <span>Asignaciones de unidades</span>
              </Banner>
              <DetailList>
                <GridRow $cols={DRIVE_COLS}>
                  <HeadCell $h={24}>Nombre</HeadCell>
                  <HeadCell $h={24}>Orden</HeadCell>
                  <HeadCell $h={24}>Acción</HeadCell>
                  <HeadCell $h={24}>Ruta de acceso</HeadCell>
                </GridRow>
                <DetailRows>
                  <GridRow $cols={DRIVE_COLS}>
                    <BodyCell $sel>F:</BodyCell>
                    <BodyCell $sel>1</BodyCell>
                    <BodyCell $sel>Actuali...</BodyCell>
                    <BodyCell>\\Server_pd_tfm\analisi</BodyCell>
                  </GridRow>
                </DetailRows>
                <HScrollBar $h={16} $end>
                  <ArrowRight />
                </HScrollBar>
              </DetailList>
            </BluePanel>
            <FooterLine />
          </EditorRight>
        </EditorBody>
        <StatusBar>
          <StatusCell $w={697}>Última modificación: 01/05/2021 23:32:32</StatusCell>
          <StatusCell $w={85} />
        </StatusBar>
      </EditorWindow>

      <Dialog>
        <DialogTitle>
          <span>Propiedades: F:</span>
          <CaptionIcon kind="close" color="#222" />
        </DialogTitle>
        <DialogBody>
          <Tabs>
            <Tab $on>General</Tab>
            <Tab>Comunes</Tab>
          </Tabs>
          <TabPanel>
            <ActionRow>
              <DriveIcon size={32} />
              <ActionLabel>Acción:</ActionLabel>
              <SelectBox $w={263} $top={5}>
                <span>Actualizar</span>
                <SelectArrow />
              </SelectBox>
            </ActionRow>
            <Separator />
            <FormRow $top={7} $left={10}>
              <FieldLabel $w={98}>Ubicación:</FieldLabel>
              <TextField $w={228}>\\Server_pd_tfm\analisi</TextField>
              <DotsButton>...</DotsButton>
            </FormRow>
            <FormRow $top={4} $left={8}>
              <FieldLabel $w={65} $mt={4}>Reconectar:</FieldLabel>
              <CheckBox><CheckMark /></CheckBox>
              <FieldLabel $w={87}>Etiquetar como:</FieldLabel>
              <TextField $w={143}>TREBALL</TextField>
            </FormRow>
            <InsetGroup $top={7} $w={360} $h={73}>
              <GroupTitle>Letra de unidad</GroupTitle>
              <DriveLetterRow>
                <RadioLine>La 1ª disponible, empezando por:</RadioLine>
                <RadioLine on>Usar:</RadioLine>
                <SelectBox $w={74}>
                  <SelectValue><DriveIcon size={18} />F</SelectValue>
                  <SelectArrow />
                </SelectBox>
              </DriveLetterRow>
            </InsetGroup>
            <InsetGroup $top={6} $w={360} $h={75}>
              <GroupTitle>Conectar como (opcional)</GroupTitle>
              <FormRow $top={5} $left={13}>
                <FieldLabel $w={94} $off>Nombre usuario:</FieldLabel>
                <TextField $w={236} $off />
              </FormRow>
              <FormRow $top={4} $left={13}>
                <FieldLabel $w={94} $off>Contraseña:</FieldLabel>
                <TextField $w={57} $h={19} $off />
                <FieldLabel $w={130} $pl={12} $off $mb={7}>Confirmar contraseña</FieldLabel>
                <TextField $w={48} $h={18} $off />
              </FormRow>
            </InsetGroup>
            <GroupsRow>
              <Group $top={6} $w={165} $h={79}>
                <GroupTitle>Mostrar u ocultar esta unidad</GroupTitle>
                <RadioList>
                  <RadioLine on left={14}>Sin cambios</RadioLine>
                  <RadioLine left={14}>Ocultar esta unidad</RadioLine>
                  <RadioLine left={14}>Mostrar esta unidad</RadioLine>
                </RadioList>
              </Group>
              <Group $top={6} $w={185} $h={79}>
                <GroupTitle>Mostrar u ocultar todas las unidades</GroupTitle>
                <RadioList>
                  <RadioLine on left={11}>Sin cambios</RadioLine>
                  <RadioLine left={11}>Ocultar todas las unidades</RadioLine>
                  <RadioLine left={11}>Mostrar todas las unidades</RadioLine>
                </RadioList>
              </Group>
            </GroupsRow>
          </TabPanel>
          <DialogButtons>
            <PushButton $def>Aceptar</PushButton>
            <PushButton>Cancelar</PushButton>
            <PushButton $off>Aplicar</PushButton>
            <PushButton>Ayuda</PushButton>
          </DialogButtons>
        </DialogBody>
      </Dialog>
    </Screen>
  )
}

export default App
